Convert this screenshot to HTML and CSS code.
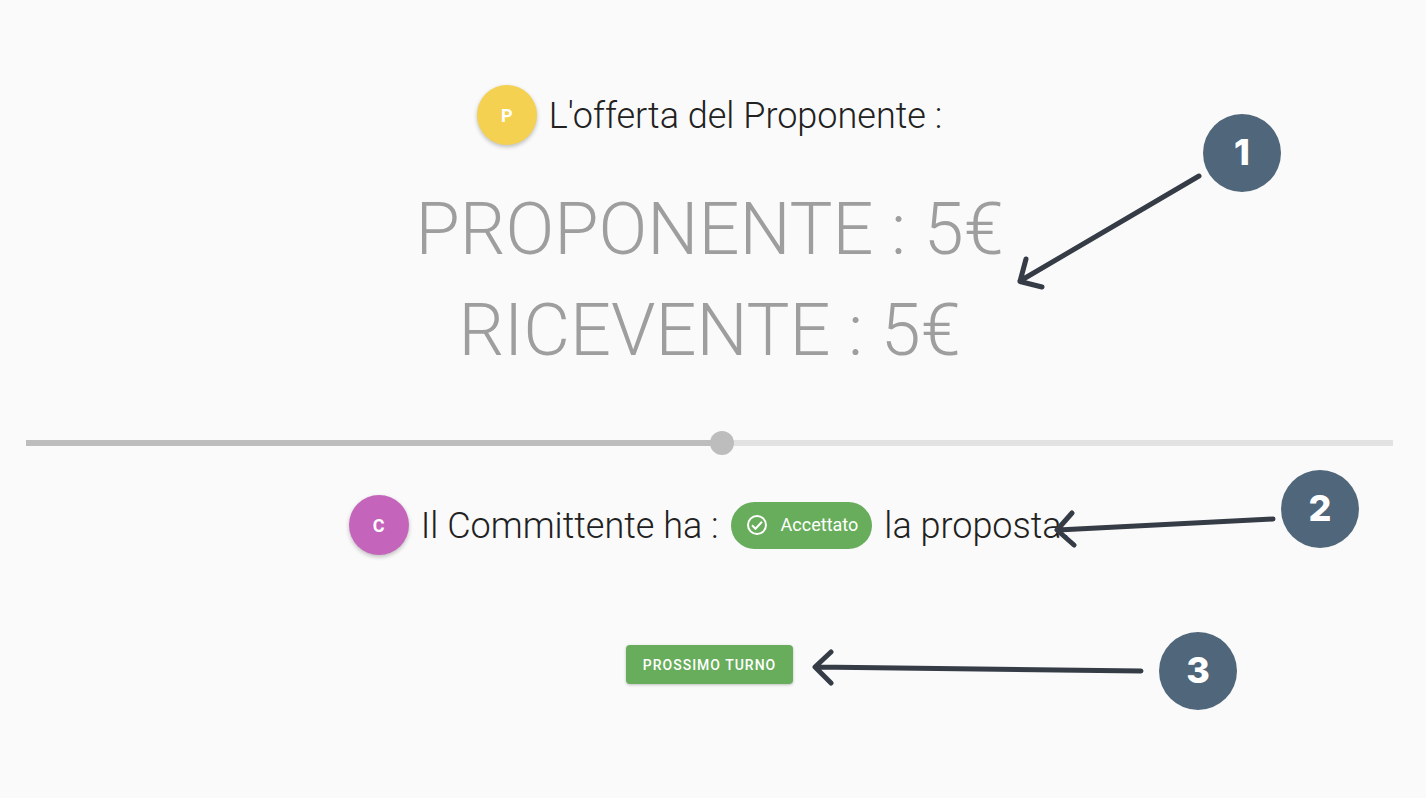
FILE: index.html
```html
<!DOCTYPE html>
<html lang="it">
<head>
<meta charset="utf-8">
<meta name="viewport" content="width=device-width, initial-scale=1">
<title>L'offerta del Proponente</title>
<link rel="stylesheet" href="styles.css">
</head>
<body>
<main class="page">
  <h1 class="row">
    <span class="avatar avatar-proposer">P</span>
    <span class="row-text">L'offerta del Proponente :</span>
  </h1>
  <section class="offer">
    <p>PROPONENTE : 5€</p>
    <p>RICEVENTE : 5€</p>
  </section>
  <input class="slider" type="range" min="0" max="100" step="any" value="50.9" aria-label="Offerta">
  <h2 class="row">
    <span class="avatar avatar-client">C</span>
    <span class="row-text">Il Committente ha :</span>
    <span class="chip">
      <svg class="chip-icon" viewBox="0 0 24 24" aria-hidden="true"><circle cx="12" cy="12" r="9" fill="none" stroke="currentColor" stroke-width="2"/><path d="M7 12.300 10.500 15.800 17 8.800" fill="none" stroke="currentColor" stroke-width="2"/></svg>
      Accettato
    </span>
    <span class="row-text">la proposta.</span>
  </h2>
  <button class="next" type="button">PROSSIMO TURNO</button>
</main>
<div class="notes">
  <svg class="arrows" width="1426" height="798" viewBox="0 0 1426 798" aria-hidden="true">
    <path d="M1199 176 1020 281M1026 259 1020 281.500 1042 287"/>
    <path d="M1273 519 1058 530M1072 513 1057 530 1074 545"/>
    <path d="M1141 671 816 667M831 652 815 667 831 683"/>
  </svg>
  <span class="note note-offer">1</span>
  <span class="note note-answer">2</span>
  <span class="note note-next">3</span>
</div>
</body>
</html>
```
FILE: styles.css
```css
* {
  box-sizing: border-box;
}

body {
  margin: 0;
  position: relative;
  background: #fafafa;
  color: #212121;
  font-family: Roboto, "Liberation Sans", sans-serif;
}

.page {
  display: flex;
  flex-direction: column;
  align-items: center;
  padding: 85px 33px 48px 26px;
}

.row {
  display: flex;
  align-items: center;
  gap: 12px;
  margin: 0;
  font-size: 36px;
  font-weight: 300;
  line-height: 60px;
  white-space: nowrap;
}

.row-text {
  padding-top: 2px;
  line-height: 58px;
}

.avatar {
  width: 60px;
  height: 60px;
  border-radius: 50%;
  color: #fff;
  font-size: 18px;
  font-weight: 700;
  line-height: 62px;
  text-align: center;
  box-shadow: 0 2px 4px rgba(0, 0, 0, 0.24);
}

.avatar-proposer {
  background: #f4d150;
}

.avatar-client {
  background: #c564bb;
}

.offer {
  margin: 34px 0 50px;
  color: #9e9e9e;
  font-size: 72px;
  font-weight: 300;
  line-height: 101px;
  text-align: center;
}

.offer p {
  margin: 0;
}

.slider {
  appearance: none;
  width: 100%;
  height: 24px;
  margin: 0 0 40px;
  background: linear-gradient(90deg, #bdbdbd 50.9%, #e2e2e2 50.9%) center / 100% 6px no-repeat;
}

.slider::-webkit-slider-thumb {
  appearance: none;
  width: 24px;
  height: 24px;
  border-radius: 50%;
  background: #bdbdbd;
}

.chip {
  display: flex;
  align-items: center;
  gap: 12px;
  height: 47px;
  padding: 0 14px;
  border-radius: 24px;
  background: #67ad5b;
  color: #fff;
  font-size: 18px;
  font-weight: 400;
}

.chip-icon {
  width: 24px;
  height: 24px;
}

.next {
  height: 39px;
  margin-top: 90px;
  padding: 0 17px;
  border: 0;
  border-radius: 4px;
  background: #67ad5b;
  color: #fff;
  font: 500 14px Roboto, "Liberation Sans", sans-serif;
  letter-spacing: 1px;
  box-shadow: 0 1px 3px rgba(0, 0, 0, 0.24);
}

.notes {
  position: absolute;
  top: 0;
  left: 0;
  pointer-events: none;
}

.arrows {
  display: block;
  fill: none;
  stroke: #353c46;
  stroke-width: 5px;
  stroke-linecap: round;
  stroke-linejoin: round;
}

.note {
  position: absolute;
  width: 78px;
  height: 78px;
  border-radius: 50%;
  background: #50667a;
  color: #fff;
  font: 800 36px/76px Inter, "Liberation Sans", sans-serif;
  text-align: center;
}

.note-offer {
  top: 114px;
  left: 1203px;
}

.note-answer {
  top: 470px;
  left: 1281px;
}

.note-next {
  top: 632px;
  left: 1159px;
}
```
